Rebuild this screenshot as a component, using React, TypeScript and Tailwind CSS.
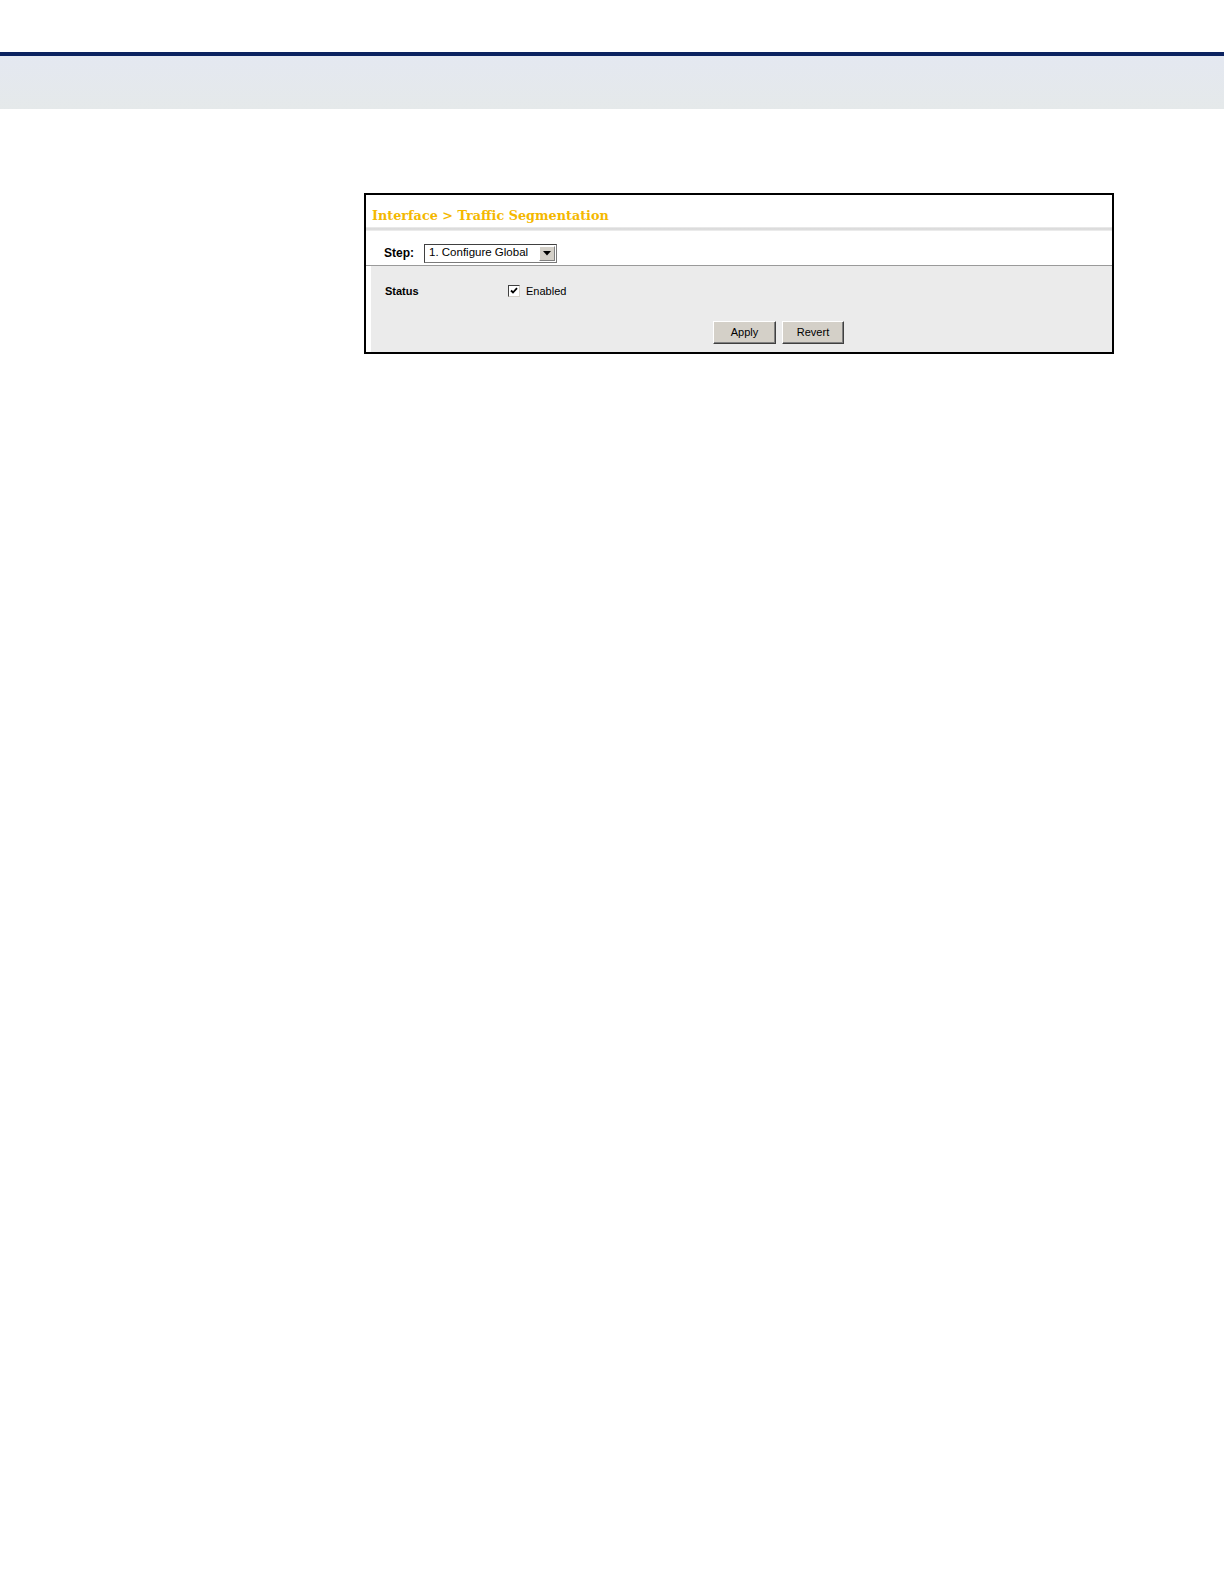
export default function App() {
  return (
    <div className="min-h-[1584px] w-[1224px] bg-white font-['Liberation_Sans',Arial,sans-serif]">
      {/* page header band */}
      <div className="h-[52px]" />
      <div className="h-[4px] bg-[#0b2260]" />
      <div className="h-[53px] bg-gradient-to-b from-[#e4e8f1] to-[#e5e9ea]" />

      <div className="pl-[364px] pt-[84px]">
        <div className="w-[750px] border-2 border-black bg-white">
          {/* title */}
          <div className="flex h-[32px] items-center pl-[6px] pt-[11px]">
            <span className="font-['DejaVu_Serif',serif] text-[12.8px] font-bold leading-none text-[#f4b800]">
              Interface &gt; Traffic Segmentation
            </span>
          </div>
          <div className="h-[4px] bg-gradient-to-b from-[#eeeeee] via-[#d6d6d6] to-[#f2f2f2]" />

          {/* step selector */}
          <div className="flex h-[34px] items-center gap-[10px] pl-[18px] pt-[10px]">
            <span className="text-[12px] font-bold leading-none text-black">Step:</span>
            <div className="flex h-[19px] w-[133px] items-center border border-[#7a7a7a] border-t-[#404040] border-l-[#404040] bg-white">
              <span className="flex-1 pl-[4px] text-[11.5px] leading-none text-black">1. Configure Global</span>
              <div className="mr-px flex h-[15px] w-[16px] items-center justify-center border border-[#808080] border-t-white border-l-white bg-[#d4d0c8]">
                <svg width="8" height="5" viewBox="0 0 8 5">
                  <path d="M0 0H8L4 4.5Z" fill="#000" />
                </svg>
              </div>
            </div>
          </div>
          <div className="h-px bg-[#9a9a9a]" />

          {/* body */}
          <div className="ml-[5px] h-[86px] bg-[#ebebeb]">
            <div className="flex h-[31px] items-end">
              <span className="w-[137px] pl-[14px] text-[11px] font-bold leading-none text-black">Status</span>
              <div className="flex items-center gap-[6px]">
                <div className="flex h-[12px] w-[12px] items-center justify-center border border-[#404040] border-r-[#d4d0c8] border-b-[#d4d0c8] bg-white">
                  <svg width="8" height="8" viewBox="0 0 8 8">
                    <path d="M1 3.5L3 5.5L7 1.2" stroke="#000" strokeWidth="1.8" fill="none" />
                  </svg>
                </div>
                <span className="text-[11px] leading-none text-black">Enabled</span>
              </div>
            </div>
            <div className="flex gap-[6px] pl-[342px] pt-[24px]">
              <button className="h-[23px] w-[63px] border border-[#404040] border-t-white border-l-white bg-[#d4d0c8] text-[11px] text-black shadow-[inset_-1px_-1px_0_#808080]">
                Apply
              </button>
              <button className="h-[23px] w-[62px] border border-[#404040] border-t-white border-l-white bg-[#d4d0c8] text-[11px] text-black shadow-[inset_-1px_-1px_0_#808080]">
                Revert
              </button>
            </div>
          </div>
        </div>
      </div>
    </div>
  )
}
